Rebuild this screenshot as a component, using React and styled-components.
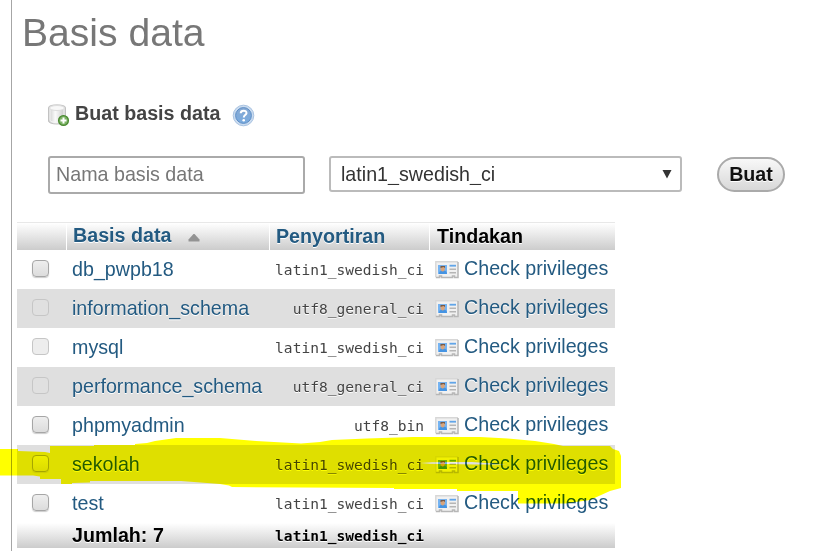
import React from "react";
import styled, { createGlobalStyle } from "styled-components";

const GlobalStyle = createGlobalStyle`
  *, *::before, *::after { box-sizing: border-box; }
  body {
    margin: 0;
    background: #fff;
    color: #444;
    font: 19.68px/22px "Liberation Sans", Arial, sans-serif;
    overflow: hidden;
  }
`;

const Page = styled.main`
  position: relative;
  height: 551px;
  padding-left: 11px;
  overflow: hidden;
`;

const Content = styled.div`
  height: 100%;
  border-left: 1px solid #a6a6a6;
`;

const Title = styled.h1`
  margin: 0;
  padding: 10px 0 0 10px;
  color: #777;
  font-size: 39.1px;
  font-weight: 400;
  line-height: 45px;
`;

const SectionHeading = styled.h2`
  display: flex;
  align-items: center;
  height: 24px;
  margin: 48px 0 0 35px;
  color: #444;
  font-size: 19.68px;
  font-weight: 700;
  line-height: 22px;

  span { margin: -5px 12px 0 5px; }
`;

const CreateForm = styled.form`
  display: flex;
  align-items: flex-start;
  height: 38px;
  margin: 29px 0 0 36px;
`;

const NameInput = styled.input`
  width: 257px;
  height: 38px;
  margin: 0 24px 0 0;
  padding: 0 6px 2px;
  border: 2px solid #aaa;
  border-radius: 3px;
  background: #fff;
  font: inherit;

  &::placeholder { color: #777; opacity: 1; }
`;

const SelectBox = styled.div`
  display: grid;
  grid-template-columns: 1fr 18px;
  align-items: center;
  width: 353px;
  height: 36px;
  margin-right: 35px;
  border: 2px solid #bbb;
  border-radius: 3px;

  svg { grid-area: 1 / 2; pointer-events: none; }
`;

const Select = styled.select`
  grid-area: 1 / 1 / 2 / 3;
  height: 32px;
  padding: 0 10px 0 10px;
  border: 0;
  background: transparent;
  appearance: none;
  color: #333;
  font: inherit;
`;

const SubmitButton = styled.button`
  width: 68px;
  height: 35px;
  margin-top: 1px;
  padding: 0 0 2px;
  border: 2px solid #aaa;
  border-radius: 18px;
  background: linear-gradient(#f8f8f8, #d8d8d8);
  color: #111;
  font: inherit;
  font-weight: 700;
  text-shadow: 0 1px 0 #fff;
`;

const Table = styled.div`
  width: 598px;
  margin: 28px 0 0 5px;
  text-shadow: 0 1px 0 #fff;
`;

const Row = styled.div`
  display: grid;
  grid-template-columns: 50px 203px 160px 185px;
  align-items: center;
  height: 39px;
  background: ${({ $shaded }) => ($shaded ? "#dfdfdf" : "#fff")};
`;

const HeaderRow = styled(Row)`
  height: 28px;
  align-items: stretch;
  border-top: 1px solid #e8e8e8;
  background: linear-gradient(#fff, #ccc);
  color: #000;
  font-weight: 700;
`;

const HeaderCell = styled.div`
  padding: ${({ $top = 2 }) => $top}px 0 0 ${({ $last }) => ($last ? 7 : 6)}px;
  border-right: ${({ $last }) => ($last ? "0" : "1px solid #fff")};
  color: ${({ $link }) => ($link ? "#235a81" : "#000")};

  svg { margin-left: 17px; }
`;

const FooterRow = styled(Row)`
  height: 25px;
  background: linear-gradient(#fff, #ccc);
  color: #000;
  font-weight: 700;
`;

const Checkbox = styled.input.attrs({ type: "checkbox" })`
  width: 17px;
  height: 17px;
  margin: -2px 0 0 15px;
  border: 1.5px solid #a6a6a6;
  border-radius: 4px;
  background: linear-gradient(#eee, #dcdcdc);
  box-shadow: 0 1px 1px #ccc;
  appearance: none;

  &:disabled {
    border-color: #c6c6c6;
    background: rgba(225, 225, 225, 0.6);
    box-shadow: none;
  }
`;

const DatabaseLink = styled.a`
  padding: 0 0 2px 5px;
  color: #235a81;
`;

const Collation = styled.div`
  padding: 1px 6px 0 0;
  font: 14.55px/18px "DejaVu Sans Mono", monospace;
  font-weight: ${({ $bold }) => ($bold ? 700 : 400)};
  text-align: right;
`;

const PrivilegesLink = styled.a`
  display: flex;
  align-items: center;
  padding-left: 5px;
  color: #235a81;

  span { margin: -4px 0 0 5px; }
  svg { margin-top: 1px; }
`;

const Total = styled.div`
  grid-column: 2;
  padding: 0 0 2px 5px;
`;

const Marker = styled.svg`
  position: absolute;
  top: 0;
  left: 0;
  mix-blend-mode: multiply;
  pointer-events: none;
`;

function DatabaseAddIcon() {
  return (
    <svg width="23" height="24" viewBox="0 0 23 24">
      <defs>
        <linearGradient id="cylinder">
          <stop stopColor="#c9c9c9" />
          <stop offset=".4" stopColor="#fafafa" />
          <stop offset="1" stopColor="#c4c4c4" />
        </linearGradient>
      </defs>
      <path d="M1.5 4.5C1.5 1 18.5 1 18.5 4.5V18C18.5 22 1.5 22 1.5 18Z" fill="url(#cylinder)" stroke="#c2c2c2" />
      <path d="M3 5V17.5C5 20 15 20 17 17.5V5" fill="none" stroke="#f5f5f5" />
      <ellipse cx="10" cy="5" rx="7.5" ry="2.5" fill="#f8f8f8" stroke="#ddd" />
      <circle cx="16.5" cy="17.5" r="4.9" fill="#7db266" stroke="#4a8a31" strokeWidth="1.3" />
      <path d="M16.5 14.5V20.5M13.5 17.5H19.5" stroke="#fff" strokeWidth="2" />
    </svg>
  );
}

function HelpIcon() {
  return (
    <svg width="23" height="23" viewBox="0 0 23 23">
      <defs>
        <linearGradient id="help" x2="0" y2="1">
          <stop stopColor="#86a9d3" />
          <stop offset="1" stopColor="#79abdf" />
        </linearGradient>
      </defs>
      <circle cx="11.5" cy="11.5" r="10.3" fill="#cbdcf0" stroke="#a9c3e1" />
      <circle cx="11.5" cy="11.5" r="7.9" fill="url(#help)" stroke="#5f8fc6" />
      <path d="M8.7 9.2C8.8 5.8 14.7 5.9 14.5 9.1C14.4 11 11.8 11.2 11.8 13.4" fill="none" stroke="#fff" strokeWidth="2" />
      <circle cx="11.7" cy="16.2" r="1.3" fill="#fff" />
    </svg>
  );
}

function CardIcon() {
  return (
    <svg width="24" height="18" viewBox="0 0 24 18">
      <path d="M1 1H23V16.5H19.5V15H17.5V16.5H6.5V15H4.5V16.5H1Z" fill="#f1f1f1" />
      <path d="M.8 16V.8H23" fill="none" stroke="#d7d7d7" strokeWidth="1.4" />
      <path d="M23 1V16.5H19.5V15H17.5V16.5H6.5V15H4.5V16.5H.8" fill="none" stroke="#b7b7b7" strokeWidth="1.5" />
      <path d="M3 4H12V13H3Z" fill="#75b3f1" />
      <path d="M4 13C4 10 6 9.5 8 9.5S12 10 12 13Z" fill="#4594e3" />
      <ellipse cx="7.7" cy="7.6" rx="2.2" ry="2.8" fill="#d9a47b" />
      <path d="M5.5 7V5H10V7L8.5 6Z" fill="#765a48" />
      <path d="M14.5 4.7H21" stroke="#61a5e8" strokeWidth="1.8" />
      <path d="M14.5 8.2H21M14.5 11.7H21" stroke="#b5b5b5" strokeWidth="1.6" />
    </svg>
  );
}

const databases = [
  { name: "db_pwpb18", collation: "latin1_swedish_ci" },
  { name: "information_schema", collation: "utf8_general_ci", system: true },
  { name: "mysql", collation: "latin1_swedish_ci", system: true },
  { name: "performance_schema", collation: "utf8_general_ci", system: true },
  { name: "phpmyadmin", collation: "utf8_bin" },
  { name: "sekolah", collation: "latin1_swedish_ci" },
  { name: "test", collation: "latin1_swedish_ci" },
];

export default function App() {
  return (
    <>
      <GlobalStyle />
      <Page>
        <Content>
          <Title>Basis data</Title>
          <SectionHeading>
            <DatabaseAddIcon />
            <span>Buat basis data</span>
            <HelpIcon />
          </SectionHeading>
          <CreateForm>
            <NameInput placeholder="Nama basis data" />
            <SelectBox>
              <Select><option>latin1_swedish_ci</option></Select>
              <svg width="10" height="10" viewBox="0 0 10 10">
                <path d="M.5 1H9.5L5 9.5Z" fill="#333" />
              </svg>
            </SelectBox>
            <SubmitButton type="button">Buat</SubmitButton>
          </CreateForm>
          <Table>
            <HeaderRow>
              <HeaderCell />
              <HeaderCell $link $top={1}>
                Basis data
                <svg width="12" height="8" viewBox="0 0 12 8">
                  <path d="M5.5 0H6.5L11.5 5.5V7.5H.5V5.5Z" fill="#939393" />
                </svg>
              </HeaderCell>
              <HeaderCell $link>Penyortiran</HeaderCell>
              <HeaderCell $last>Tindakan</HeaderCell>
            </HeaderRow>
            {databases.map((db, index) => (
              <Row key={db.name} $shaded={index % 2 === 1}>
                <Checkbox disabled={db.system} />
                <DatabaseLink>{db.name}</DatabaseLink>
                <Collation>{db.collation}</Collation>
                <PrivilegesLink>
                  <CardIcon />
                  <span>Check privileges</span>
                </PrivilegesLink>
              </Row>
            ))}
            <FooterRow>
              <Total>Jumlah: 7</Total>
              <Collation $bold>latin1_swedish_ci</Collation>
            </FooterRow>
          </Table>
        </Content>
        <Marker width="821" height="551" viewBox="0 0 821 551">
          <path
            fill="#ff0"
            fillRule="evenodd"
            d="M0 449H18V451L45 452L50 453V446H94V445H135V444L147 443L155 441L176 438H220L256 441L301 443.5L320 442L332 440L367 438.5L413 437H480L508 438.5L535 441L554 444L563 446H610L613 449L619 451L621 456V488L610 491L590 500L565 503.5H518V491H457V489H394V488L232 487L229 485.5L220 484L181 481H90V482.5L72 483V484H61V479H40V476.5L33 475.5H0ZM420 463L432 462.3L472 462L507 464.5L475 464.5L430 463.7Z"
          />
        </Marker>
      </Page>
    </>
  );
}
